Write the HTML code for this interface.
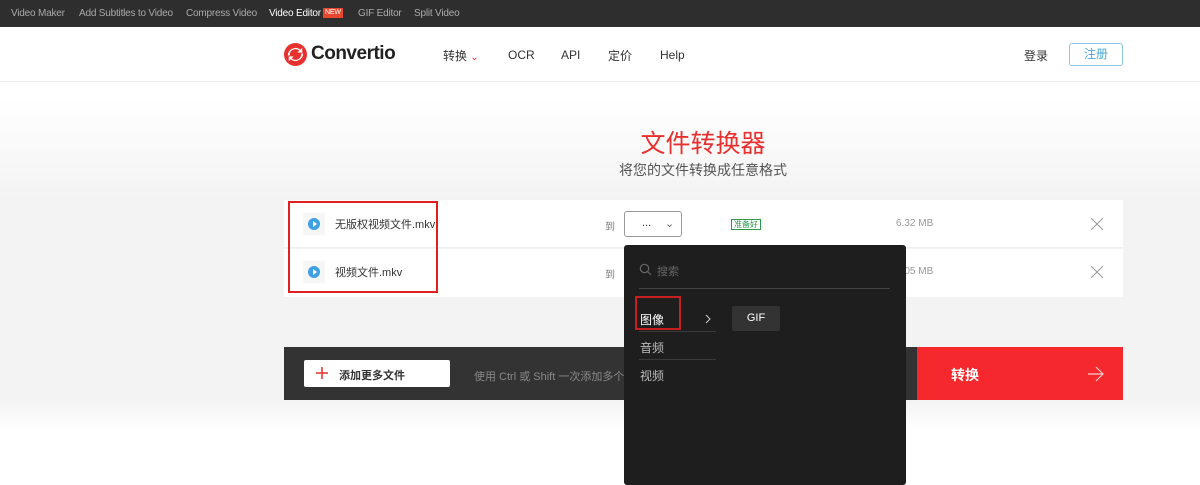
<!DOCTYPE html>
<html><head><meta charset="utf-8"><style>
*{box-sizing:border-box;margin:0;padding:0}
body{width:1200px;height:480px;overflow:hidden;font-family:"Liberation Sans","Noto Sans CJK SC",sans-serif;background:linear-gradient(#fff 82px,#fff 100px,#f3f3f3 200px,#f3f3f3 400px,#fff 430px);position:relative;color:#333}
.top{position:absolute;left:0;top:0;width:1200px;height:27px;background:#2e2e2e;font-size:10px;color:#aaa}
.top span{position:absolute;top:8px;letter-spacing:-0.2px}
.hdr{position:absolute;top:27px;left:0;width:1200px;height:55px;background:#fff;border-bottom:1px solid #eee}
.a{position:absolute}
.row{position:absolute;left:284px;width:839px;height:48px;background:#fff}
.pl{position:absolute;width:22px;height:22px;background:#f6f6f6}
.pl i{position:absolute;left:5px;top:5px;width:12px;height:12px;border-radius:50%;background:#3ea0e6}
.pl b{position:absolute;left:10px;top:8px;border-left:4px solid #fff;border-top:3px solid transparent;border-bottom:3px solid transparent}
</style></head><body>
<div class="top">
<span style="left:11px">Video Maker</span>
<span style="left:79px">Add Subtitles to Video</span>
<span style="left:186px">Compress Video</span>
<span style="left:269px;color:#fff">Video Editor</span>
<span style="left:323px;top:8px;background:#e8462e;color:#fff;font-size:7px;padding:0 2px;line-height:10px">NEW</span>
<span style="left:358px">GIF Editor</span>
<span style="left:414px">Split Video</span>
</div>
<div class="hdr">
<svg class="a" style="left:284px;top:16px" width="23" height="23" viewBox="0 0 24 24"><circle cx="12" cy="12" r="12" fill="#e8302f"/><path d="M6 13a6 6 0 0 1 10-5l-2 2h5V5l-2 2A8 8 0 0 0 4 13z" fill="#fff"/><path d="M18 11a6 6 0 0 1-10 5l2-2H5v5l2-2a8 8 0 0 0 13-6z" fill="#fff"/></svg>
<div class="a" style="left:311px;top:16px;font-size:19px;font-weight:bold;color:#222;letter-spacing:-0.5px">Convertio</div>
<div class="a" style="left:443px;top:20px;font-size:12px">转换 <span style="color:#e8302f;font-size:10px">&#8964;</span></div>
<div class="a" style="left:508px;top:21px;font-size:12px">OCR</div>
<div class="a" style="left:561px;top:21px;font-size:12px">API</div>
<div class="a" style="left:608px;top:20px;font-size:12px">定价</div>
<div class="a" style="left:660px;top:21px;font-size:12px">Help</div>
<div class="a" style="left:1024px;top:20px;font-size:12px">登录</div>
<div class="a" style="left:1069px;top:16px;width:54px;height:23px;border:1px solid #8cc8e0;border-radius:3px;font-size:12px;color:#4aa7d0;text-align:center;line-height:21px">注册</div>
</div>
<div class="a" style="left:503px;width:400px;top:124px;text-align:center;font-size:25px;color:#e8302f">文件转换器</div>
<div class="a" style="left:503px;width:400px;top:160px;text-align:center;font-size:14px;color:#555">将您的文件转换成任意格式</div>

<div class="row" style="top:200px;border-bottom:1px solid #eee"></div>
<div class="row" style="top:249px"></div>
<div class="a" style="left:284px;top:297px;width:839px;height:50px;background:#f3f3f3"></div>
<div class="pl" style="left:303px;top:213px"><i></i><b></b></div>
<div class="pl" style="left:303px;top:261px"><i></i><b></b></div>
<div class="a" style="left:335px;top:216px;font-size:11px">无版权视频文件.mkv</div>
<div class="a" style="left:335px;top:264px;font-size:11px">视频文件.mkv</div>
<div class="a" style="left:288px;top:201px;width:150px;height:92px;border:2px solid #e02020"></div>
<div class="a" style="left:605px;top:218px;font-size:10px;color:#777">到</div>
<div class="a" style="left:605px;top:266px;font-size:10px;color:#777">到</div>
<div class="a" style="left:624px;top:211px;width:58px;height:26px;border:1px solid #999;border-radius:3px;background:#fff;font-size:11px"><span style="position:absolute;left:17px;top:5px">...</span><span style="position:absolute;left:40px;top:5px;color:#666">&#8964;</span></div>
<div class="a" style="left:731px;top:219px;font-size:8px;color:#2a9a4a;border:1px solid #2a9a4a;padding:0 2px;line-height:9px">准备好</div>
<div class="a" style="left:896px;top:218px;font-size:10px;color:#999">6.32 MB</div>
<div class="a" style="left:896px;top:266px;font-size:10px;color:#999">6.05 MB</div>
<svg class="a" style="left:1091px;top:218px" width="12" height="12"><path d="M0 0L12 12M12 0L0 12" stroke="#999" stroke-width="1"/></svg>
<svg class="a" style="left:1091px;top:266px" width="12" height="12"><path d="M0 0L12 12M12 0L0 12" stroke="#999" stroke-width="1"/></svg>

<div class="a" style="left:284px;top:347px;width:633px;height:53px;background:#333"></div>
<div class="a" style="left:917px;top:347px;width:206px;height:53px;background:#f5282d"></div>
<div class="a" style="left:951px;top:365px;font-size:14px;font-weight:bold;color:#fff">转换</div>
<svg class="a" style="left:1088px;top:366px" width="16" height="16"><path d="M0 8H15M8 1L15 8L8 15" fill="none" stroke="#fcc" stroke-width="1.2"/></svg>
<div class="a" style="left:304px;top:360px;width:146px;height:27px;background:#fff;border-radius:2px"><svg style="position:absolute;left:12px;top:7px" width="12" height="12"><path d="M6 0V12M0 6H12" stroke="#e8302f" stroke-width="1.5"/></svg><span style="position:absolute;left:35px;top:7px;font-size:11px;font-weight:bold">添加更多文件</span></div>
<div class="a" style="left:474px;top:368px;font-size:11px;color:#888">使用 Ctrl 或 Shift 一次添加多个文件</div>

<div class="a" style="left:624px;top:245px;width:282px;height:240px;background:#1e1e1e;border-radius:3px">
<div class="a" style="left:15px;top:18px;width:13px;height:13px"><svg width="13" height="13" viewBox="0 0 13 13"><circle cx="5.5" cy="5.5" r="4.2" fill="none" stroke="#666" stroke-width="1.2"/><path d="M8.5 8.5l3.5 3.5" stroke="#666" stroke-width="1.2"/></svg></div>
<div class="a" style="left:33px;top:18px;font-size:11px;color:#666">搜索</div>
<div class="a" style="left:15px;top:43px;width:251px;height:1px;background:#444"></div>
<div class="a" style="left:16px;top:66px;font-size:12px;color:#fff">图像</div>
<svg class="a" style="left:81px;top:69px" width="6" height="10"><path d="M1 1L5 5L1 9" fill="none" stroke="#ccc" stroke-width="1"/></svg>
<div class="a" style="left:11px;top:51px;width:46px;height:34px;border:2px solid #c81e1e"></div>
<div class="a" style="left:15px;top:86px;width:77px;height:1px;background:#3a3a3a"></div>
<div class="a" style="left:16px;top:94px;font-size:12px;color:#bbb">音频</div>
<div class="a" style="left:15px;top:114px;width:77px;height:1px;background:#3a3a3a"></div>
<div class="a" style="left:16px;top:122px;font-size:12px;color:#bbb">视频</div>
<div class="a" style="left:108px;top:61px;width:48px;height:25px;background:#333;border-radius:2px;color:#fff;font-size:11px;text-align:center;line-height:25px">GIF</div>
</div>
</body></html>
